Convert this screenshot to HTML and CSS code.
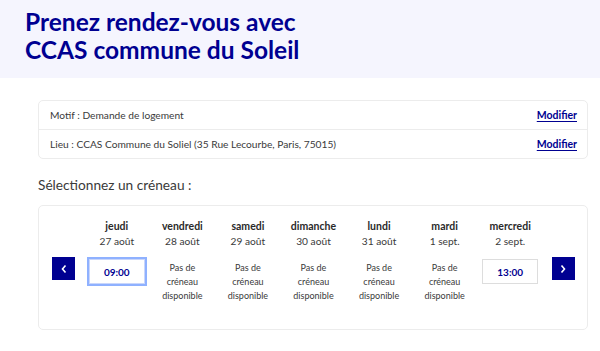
FILE: index.html
```html
<!DOCTYPE html>
<html lang="fr">
<head>
    <meta charset="UTF-8">
    <meta name="viewport" content="width=device-width, initial-scale=1.0">
    <title>Prendre rendez-vous</title>
    <link rel="stylesheet" href="styles.css">
</head>
<body>

<div class="banner">
  <h1 class="banner-title">Prenez rendez-vous avec<br>CCAS commune du Soleil</h1>
</div>

<div class="content">
  <div class="recap">
    <div class="recap-row">
      <span>Motif : Demande de logement</span>
      <a class="edit-link" href="#">Modifier</a>
    </div>
    <div class="recap-row">
      <span>Lieu : CCAS Commune du Soliel (35 Rue Lecourbe, Paris, 75015)</span>
      <a class="edit-link" href="#">Modifier</a>
    </div>
  </div>

  <p class="pick-label">Sélectionnez un créneau :</p>

  <div class="calendar">
    <button class="nav-button prev" type="button">
      <svg width="8" height="10" viewBox="0 0 8 10"><path d="M5.5 1.5 2.5 5l3 3.5" fill="none" stroke="#fff" stroke-width="1.6"/></svg>
    </button>

    <div class="day">
      <div class="day-name">jeudi</div>
      <div class="day-date">27 août</div>
      <button class="slot selected" type="button">09:00</button>
    </div>
    <div class="day">
      <div class="day-name">vendredi</div>
      <div class="day-date">28 août</div>
      <div class="no-slot">Pas de<br>créneau<br>disponible</div>
    </div>
    <div class="day">
      <div class="day-name">samedi</div>
      <div class="day-date">29 août</div>
      <div class="no-slot">Pas de<br>créneau<br>disponible</div>
    </div>
    <div class="day">
      <div class="day-name">dimanche</div>
      <div class="day-date">30 août</div>
      <div class="no-slot">Pas de<br>créneau<br>disponible</div>
    </div>
    <div class="day">
      <div class="day-name">lundi</div>
      <div class="day-date">31 août</div>
      <div class="no-slot">Pas de<br>créneau<br>disponible</div>
    </div>
    <div class="day">
      <div class="day-name">mardi</div>
      <div class="day-date">1 sept.</div>
      <div class="no-slot">Pas de<br>créneau<br>disponible</div>
    </div>
    <div class="day">
      <div class="day-name">mercredi</div>
      <div class="day-date">2 sept.</div>
      <button class="slot" type="button">13:00</button>
    </div>

    <button class="nav-button next" type="button">
      <svg width="8" height="10" viewBox="0 0 8 10"><path d="M2.5 1.5 5.5 5l-3 3.5" fill="none" stroke="#fff" stroke-width="1.6"/></svg>
    </button>
  </div>
</div>

</body>
</html>
```

FILE: styles.css
```css
body {
  margin: 0;
  font-family: Lato, sans-serif;
  color: #3a3a3a;
  background: #fff;
}

div.banner {
  background: #f5f5fe;
  height: 78px;
  padding: 8px 0 0 25px;
  box-sizing: border-box;
}

h1.banner-title {
  margin: 0;
  color: #000091;
  font-size: 24.5px;
  line-height: 28px;
  font-weight: 700;
}

div.content {
  margin: 22px 12px 0 38px;
}

div.recap {
  border: 1px solid #ececec;
  border-radius: 5px;
}

div.recap-row {
  display: flex;
  justify-content: space-between;
  align-items: center;
  height: 28px;
  padding: 0 10px 0 11px;
  font-size: 10.2px;
}

div.recap-row + div.recap-row {
  border-top: 1px solid #ececec;
}

a.edit-link {
  color: #000091;
  font-weight: 700;
  font-size: 10.5px;
  text-decoration: underline;
  text-underline-offset: 2px;
}

p.pick-label {
  margin: 18px 0 0 0;
  font-size: 13.7px;
  line-height: 16px;
}

div.calendar {
  margin-top: 12px;
  border: 1px solid #ececec;
  border-radius: 5px;
  height: 125px;
  box-sizing: border-box;
  padding: 13px 12px 0 13px;
  display: grid;
  grid-template-columns: 32px repeat(7, 1fr) 32px;
  align-items: start;
}

button.nav-button {
  width: 23px;
  height: 23px;
  margin-top: 38px;
  padding: 0;
  border: 0;
  background: #000091;
  display: flex;
  align-items: center;
  justify-content: center;
}

button.next {
  justify-self: end;
}

div.day {
  display: flex;
  flex-direction: column;
  align-items: center;
  font-size: 10.2px;
  line-height: 15px;
}

div.day-name {
  font-weight: 700;
  color: #2a2a2a;
  font-size: 10.5px;
}

div.day-date {
  margin-bottom: 10px;
}

button.slot {
  width: 56px;
  height: 25px;
  border: 1px solid #dddddd;
  background: #fff;
  color: #000091;
  font-family: Lato, sans-serif;
  font-size: 10px;
  font-weight: 700;
  padding: 0;
}

button.slot.selected {
  outline: 2px solid #8fb1ff;
  outline-offset: 0;
  border-color: #c9d6fb;
}

div.no-slot {
  font-size: 9px;
  line-height: 14px;
  text-align: center;
  margin-top: 2px;
}
```
